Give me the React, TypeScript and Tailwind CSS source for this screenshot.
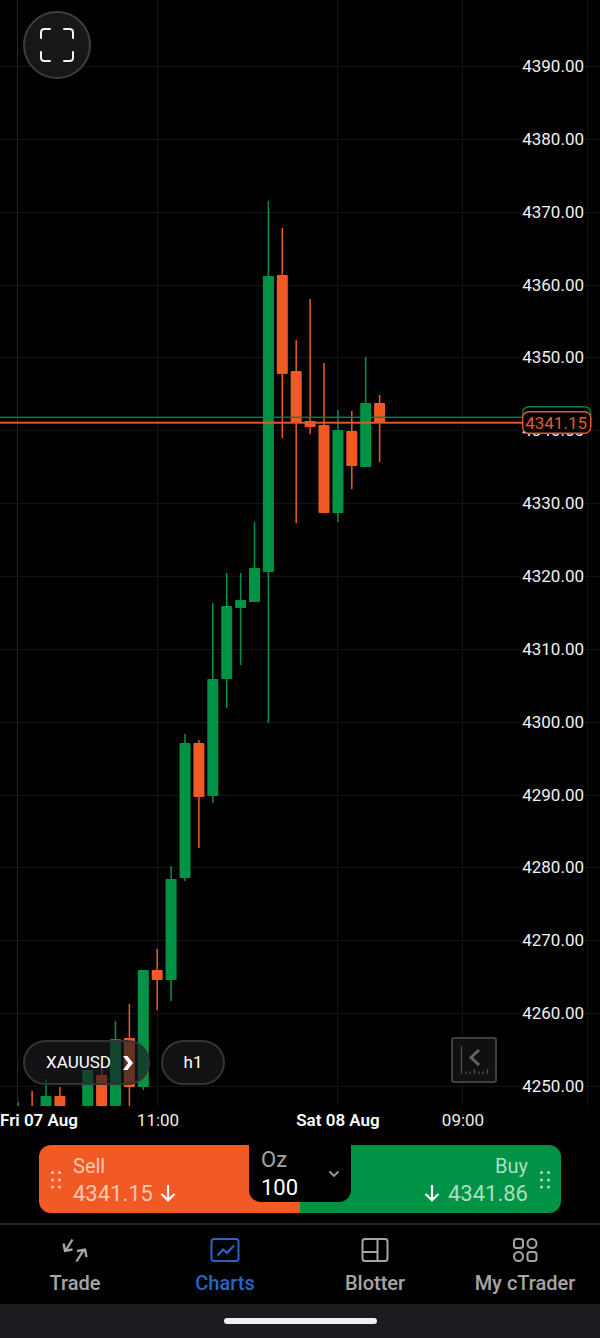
import { ReactNode } from "react";

type Candle = {
  slot: number;
  up: boolean;
  high: number;
  top: number;
  bottom: number;
  low: number;
};

const GREEN = "#009345";
const ORANGE = "#f15a24";

const CHART_WIDTH = 600;
const CHART_HEIGHT = 1136;
const PLOT_BOTTOM = 1106;

const candles: Candle[] = [
  { slot: 0, up: true, high: 1102, top: 1106, bottom: 1106, low: 1106 },
  { slot: 1, up: false, high: 1091, top: 1106, bottom: 1106, low: 1106 },
  { slot: 2, up: true, high: 1079, top: 1096, bottom: 1106, low: 1106 },
  { slot: 3, up: false, high: 1087, top: 1096, bottom: 1106, low: 1106 },
  { slot: 5, up: true, high: 1070, top: 1070, bottom: 1106, low: 1106 },
  { slot: 6, up: false, high: 1068, top: 1075, bottom: 1106, low: 1106 },
  { slot: 7, up: true, high: 1021, top: 1039, bottom: 1106, low: 1106 },
  { slot: 8, up: false, high: 1004, top: 1038, bottom: 1087, low: 1106 },
  { slot: 9, up: true, high: 970, top: 970, bottom: 1087, low: 1090 },
  { slot: 10, up: false, high: 949, top: 970, bottom: 980, low: 1010 },
  { slot: 11, up: true, high: 866, top: 879, bottom: 980, low: 1001 },
  { slot: 12, up: true, high: 734, top: 743, bottom: 878, low: 881 },
  { slot: 13, up: false, high: 740, top: 743, bottom: 797, low: 848 },
  { slot: 14, up: true, high: 603, top: 679, bottom: 796, low: 803 },
  { slot: 15, up: true, high: 573, top: 606, bottom: 679, low: 708 },
  { slot: 16, up: true, high: 573, top: 600, bottom: 608, low: 665 },
  { slot: 17, up: true, high: 522, top: 568, bottom: 602, low: 602 },
  { slot: 18, up: true, high: 201, top: 276, bottom: 572, low: 723 },
  { slot: 19, up: false, high: 228, top: 275, bottom: 374, low: 438 },
  { slot: 20, up: false, high: 340, top: 371, bottom: 423, low: 523 },
  { slot: 21, up: false, high: 299, top: 421, bottom: 427, low: 434 },
  { slot: 22, up: false, high: 363, top: 425, bottom: 513, low: 513 },
  { slot: 23, up: true, high: 410, top: 430, bottom: 513, low: 522 },
  { slot: 24, up: false, high: 411, top: 431, bottom: 466, low: 489 },
  { slot: 25, up: true, high: 357, top: 403, bottom: 467, low: 467 },
  { slot: 26, up: false, high: 395, top: 403, bottom: 423, low: 462 },
];

const prices = Array.from({ length: 15 }, (_, i) => 4390 - i * 10);

const times = [
  { x: 39, label: "Fri 07 Aug", bold: true },
  { x: 158, label: "11:00", bold: false },
  { x: 338, label: "Sat 08 Aug", bold: true },
  { x: 463, label: "09:00", bold: false },
];

const priceToY = (price: number) => 66.5 + (4390 - price) * 7.286;

function CandleChart() {
  return (
    <svg
      className="block w-full"
      viewBox={`0 0 ${CHART_WIDTH} ${CHART_HEIGHT}`}
      fontSize={17}
      role="img"
      aria-label="XAUUSD hourly chart"
    >
      {[157, 337, 462, 587].map(x => (
        <rect key={x} x={x} y={0} width={1} height={PLOT_BOTTOM} fill="#141414" />
      ))}
      <rect x={17} y={0} width={1} height={PLOT_BOTTOM} fill="#282828" />
      {prices.map(price => (
        <g key={price} fill="#141414">
          <rect x={0} y={Math.round(priceToY(price) - 0.5)} width={520} height={1} />
          <rect x={585} y={Math.round(priceToY(price) - 0.5)} width={15} height={1} />
        </g>
      ))}

      {candles.map(c => {
        const x = 18.2 + c.slot * 13.9;
        return (
          <g key={c.slot} fill={c.up ? GREEN : ORANGE}>
            <rect x={x - 0.75} y={c.high} width={1.5} height={c.low - c.high} />
            <rect x={x - 5.5} y={c.top} width={11} height={c.bottom - c.top} rx={1} />
          </g>
        );
      })}

      {prices.map(price => (
        <text key={price} x={584} y={priceToY(price) + 5.5} textAnchor="end" fill="#f2f2f2">
          {price.toFixed(2)}
        </text>
      ))}
      {times.map(t => (
        <text
          key={t.label}
          x={t.x}
          y={1126}
          textAnchor="middle"
          fill={t.bold ? "#ffffff" : "#ececec"}
          fontWeight={t.bold ? 600 : 400}
        >
          {t.label}
        </text>
      ))}

      {/* ask and bid lines with their price tags */}
      <rect x={0} y={416.6} width={523} height={1.4} fill="#0a8040" />
      <rect x={0} y={421.7} width={523} height={2} fill="#dc5a2c" />
      <rect x={522.7} y={406.7} width={68} height={24} rx={6} fill="#000" stroke="#0a8040" strokeWidth={1.4} />
      <rect x={522.7} y={411.7} width={68} height={21.6} rx={6} fill="#000" stroke="#dc5a2c" strokeWidth={1.4} />
      <text x={587} y={429} textAnchor="end" fill="#e35c2b">
        4341.15
      </text>
    </svg>
  );
}

function DragDots() {
  return (
    <svg className="w-[10px] h-[18px] shrink-0" viewBox="0 0 10 18" fill="currentColor">
      {[1.5, 8.5].map(x =>
        [1.5, 9, 16].map(y => <circle key={`${x}-${y}`} cx={x} cy={y} r={1.5} />)
      )}
    </svg>
  );
}

function ArrowDown() {
  return (
    <svg
      className="w-4 h-5 text-white"
      viewBox="0 0 16 20"
      fill="none"
      stroke="currentColor"
      strokeWidth={2.2}
    >
      <path d="M8 1v15M1.500 10L8 16.300l6.500-6.300" />
    </svg>
  );
}

function QuoteBar() {
  return (
    <section className="relative mx-[39px] mt-[9px] grid grid-cols-2 rounded-xl overflow-hidden text-[22px] leading-7">
      <button className="flex items-center gap-3 bg-[#f15a24] pt-[7px] pb-[5px] pl-3 text-left text-[#fbc8b4]">
        <DragDots />
        <span>
          <span className="block text-xl leading-7">Sell</span>
          <span className="flex items-center gap-[7px]">
            4341.15 <ArrowDown />
          </span>
        </span>
      </button>
      <button className="flex items-center justify-end gap-3 bg-[#009345] pt-[7px] pb-[5px] pr-[11px] text-right text-[#aadfc0]">
        <span>
          <span className="block text-xl leading-7">Buy</span>
          <span className="flex items-center gap-2">
            <ArrowDown /> 4341.86
          </span>
        </span>
        <DragDots />
      </button>
      <div className="absolute top-0 left-1/2 w-[102px] -translate-x-1/2 rounded-b-xl bg-black px-3 pt-px">
        <label htmlFor="volume" className="block text-[#a3a3a3]">
          Oz
        </label>
        <select id="volume" className="block w-full appearance-none bg-transparent text-white outline-none">
          <option>100</option>
          <option>200</option>
        </select>
        <svg
          className="pointer-events-none absolute right-3 top-[25px] w-[10px] h-2 text-[#9b9b9b]"
          viewBox="0 0 10 8"
          fill="none"
          stroke="currentColor"
          strokeWidth={1.8}
        >
          <path d="M.6 1.500L5 6l4.400-4.500" />
        </svg>
      </div>
    </section>
  );
}

function NavItem({
  label,
  active = false,
  children,
}: {
  label: string;
  active?: boolean;
  children: ReactNode;
}) {
  return (
    <a
      href="#"
      aria-current={active ? "page" : undefined}
      className={`flex flex-col items-center gap-[5px] pt-[11px] pb-[7px] ${
        active ? "text-[#2467c2]" : "text-[#a6a6a6]"
      }`}
    >
      <svg className="w-8 h-7" viewBox="0 0 32 28" fill="none" stroke="currentColor" strokeWidth={2}>
        {children}
      </svg>
      <span className="text-xl leading-7 font-medium">{label}</span>
    </a>
  );
}

export default function App() {
  return (
    <main className="bg-black text-white font-[Roboto,sans-serif]">
      <section className="relative">
        <CandleChart />
        <button
          aria-label="Full screen"
          className="absolute left-[23px] top-[11px] flex size-[68px] items-center justify-center rounded-full border-2 border-[#3e3e40] bg-[#17171a]"
        >
          <svg className="size-9" viewBox="0 0 36 36" fill="none" stroke="#f2f2f2" strokeWidth={2}>
            <path
              strokeLinecap="round"
              d="M2 11V5.500Q2 2 5.500 2H11M25 2h5.500Q34 2 34 5.500V11M34 25v5.500Q34 34 30.500 34H25M11 34H5.500Q2 34 2 30.500V25"
            />
          </svg>
        </button>
        <div className="absolute inset-x-0 bottom-[51px] flex h-12 pl-[23px] pr-[103px] text-[17px]">
          <button className="flex h-[45px] w-[127px] items-center justify-end gap-3 self-end rounded-full border-2 border-[#343436] bg-[#1c1c20]/65 pr-[15px]">
            XAUUSD
            <svg className="w-[10px] h-4" viewBox="0 0 10 16" fill="currentColor">
              <path d="M0 1h4.500L10 8l-5.500 7H0l5.200-7z" />
            </svg>
          </button>
          <button className="ml-[11px] h-[45px] w-16 self-end rounded-full border-2 border-[#343436] bg-[#1c1c20]/65">
            h1
          </button>
          <button
            aria-label="Hide price axis"
            className="ml-auto flex size-[46px] items-center justify-center self-start rounded-[3px] border-2 border-[#404040] bg-[#0f1011]"
          >
            <svg className="w-8 h-8 shrink-0" viewBox="0 0 32 32" fill="none" stroke="#4c4c4c">
              <path strokeWidth={1.400} d="M3.500 2v28M8 27.500v2.500M12 27.500v2.500M16.500 25v5M21 27.500v2.500M25 27.500v2.500M29.500 25v5" />
              <path stroke="#626262" strokeWidth={3} d="M21 6l-8 7.500L21 21" />
            </svg>
          </button>
        </div>
      </section>

      <QuoteBar />

      <nav className="mt-[10px] grid grid-cols-4 border-t-2 border-[#242626]">
        <NavItem label="Trade">
          <path
            strokeWidth={2.3}
            d="M13.500 3.500L7 14M4.500 7.500L6 15l7.500-1.500M17.500 25.500L25 13.500M18 15l8-1.500 1.500 7.500"
          />
        </NavItem>
        <NavItem label="Charts" active>
          <rect x={2.5} y={3} width={27} height={22} rx={2.5} />
          <path strokeWidth={2.3} d="M8.500 19.500l5.500-6 4 3.500 7-7.500" />
        </NavItem>
        <NavItem label="Blotter">
          <rect x={3.5} y={3} width={25} height={22} rx={2.5} />
          <path d="M18.500 3v22M3.500 16h15" />
        </NavItem>
        <NavItem label="My cTrader">
          <rect x={5} y={3} width={9} height={9} rx={2.5} />
          <circle cx={23} cy={7.5} r={4.5} />
          <circle cx={9.5} cy={20.5} r={4.5} />
          <rect x={18.5} y={16} width={9} height={9} rx={2.5} />
        </NavItem>
      </nav>

      <footer className="flex h-[34px] items-center justify-center bg-[#1c1b1f]">
        <div className="h-[6px] w-[153px] rounded-full bg-[#f0eef2]" />
      </footer>
    </main>
  );
}
